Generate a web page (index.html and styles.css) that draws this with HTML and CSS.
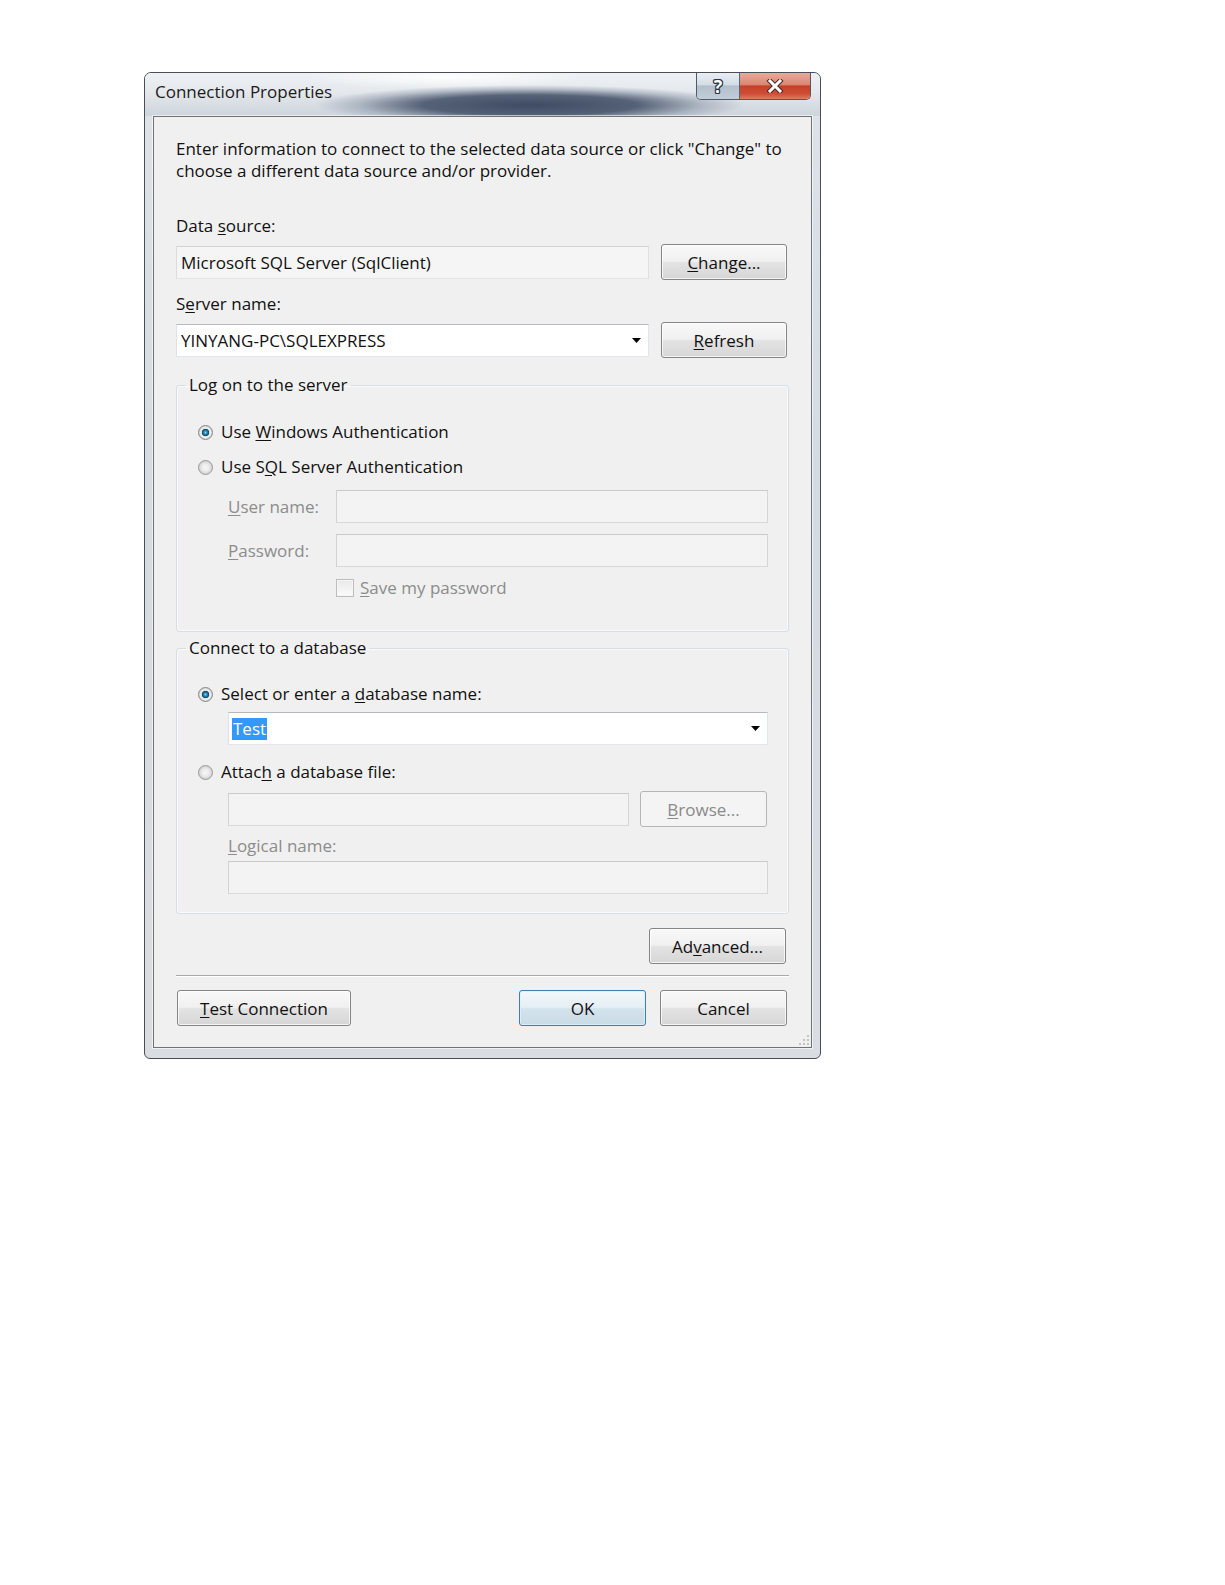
FILE: index.html
```html
<!DOCTYPE html>
<html>
<head>
<meta charset="utf-8">
<title>Connection Properties</title>
<link rel="stylesheet" href="styles.css">
</head>
<body>
<div class="dialog">
  <div class="titlebar">
    <span class="title">Connection Properties</span>
    <div class="caption-btns">
      <span class="cap-btn help">?</span>
      <span class="cap-btn close">
        <svg width="18" height="14" viewBox="0 0 18 14">
          <path d="M4 2 L14 12 M14 2 L4 12" stroke="#4a2a26" stroke-width="5" stroke-linecap="square"/>
          <path d="M4 2 L14 12 M14 2 L4 12" stroke="#ffffff" stroke-width="3" stroke-linecap="square"/>
        </svg>
      </span>
    </div>
  </div>
  <div class="client">
    <p class="intro">Enter information to connect to the selected data source or click "Change" to<br>choose a different data source and/or provider.</p>

    <div class="label first-label">Data <u>s</u>ource:</div>
    <div class="row">
      <div class="field readonly">Microsoft SQL Server (SqlClient)</div>
      <button class="btn"><u>C</u>hange...</button>
    </div>

    <div class="label second-label">S<u>e</u>rver name:</div>
    <div class="row">
      <div class="field combo"><span>YINYANG-PC\SQLEXPRESS</span><svg class="arrow" width="9" height="5" viewBox="0 0 9 5"><path d="M0 0 H9 L4.5 5 Z" fill="#000"/></svg></div>
      <button class="btn"><u>R</u>efresh</button>
    </div>

    <fieldset class="group group-logon">
      <legend>Log on to the server</legend>
      <div class="opt"><span class="radio checked"></span><span>Use <u>W</u>indows Authentication</span></div>
      <div class="opt opt-gap"><span class="radio"></span><span>Use S<u>Q</u>L Server Authentication</span></div>
      <div class="subrow user-row">
        <span class="sublabel dis"><u>U</u>ser name:</span>
        <div class="field disabled"></div>
      </div>
      <div class="subrow pass-row">
        <span class="sublabel dis"><u>P</u>assword:</span>
        <div class="field disabled"></div>
      </div>
      <div class="check-row">
        <span class="checkbox"></span><span class="dis"><u>S</u>ave my password</span>
      </div>
    </fieldset>

    <fieldset class="group group-db">
      <legend>Connect to a database</legend>
      <div class="opt"><span class="radio checked"></span><span>Select or enter a <u>d</u>atabase name:</span></div>
      <div class="field combo db-combo"><span class="sel">Test</span><svg class="arrow" width="9" height="5" viewBox="0 0 9 5"><path d="M0 0 H9 L4.5 5 Z" fill="#000"/></svg></div>
      <div class="opt attach-opt"><span class="radio"></span><span>Attac<u>h</u> a database file:</span></div>
      <div class="attach-row">
        <div class="field disabled"></div>
        <button class="btn btn-disabled browse"><u>B</u>rowse...</button>
      </div>
      <div class="indent-label dis"><u>L</u>ogical name:</div>
      <div class="field disabled logical"></div>
    </fieldset>

    <div class="adv-row">
      <button class="btn adv">Ad<u>v</u>anced...</button>
    </div>

    <div class="separator"></div>

    <div class="bottom-row">
      <button class="btn test"><u>T</u>est Connection</button>
      <div class="ok-cancel">
        <button class="btn default">OK</button>
        <button class="btn">Cancel</button>
      </div>
    </div>

    <svg class="grip" width="12" height="12" viewBox="0 0 12 12">
      <rect x="9" y="1" width="2" height="2" fill="#c4c4c4"/>
      <rect x="5" y="5" width="2" height="2" fill="#c4c4c4"/>
      <rect x="9" y="5" width="2" height="2" fill="#c4c4c4"/>
      <rect x="1" y="9" width="2" height="2" fill="#c4c4c4"/>
      <rect x="5" y="9" width="2" height="2" fill="#c4c4c4"/>
      <rect x="9" y="9" width="2" height="2" fill="#c4c4c4"/>
    </svg>
  </div>
</div>
</body>
</html>
```

FILE: styles.css
```css
* { box-sizing: border-box; }

body {
  margin: 0;
  background: #ffffff;
  font-family: "Open Sans", "Noto Sans", sans-serif;
  font-size: 17px;
  color: #111111;
}

u { text-decoration: underline; text-underline-offset: 2px; }

.dialog {
  margin: 72px 0 0 144px;
  width: 677px;
  height: 987px;
  border: 1px solid #4a4d52;
  border-radius: 7px 7px 6px 6px;
  background: linear-gradient(to bottom, #dde3e9 0%, #d4dbe2 40%, #d9dde2 100%);
  padding: 0 8px 10px;
  display: flex;
  flex-direction: column;
}

.titlebar {
  height: 43px;
  margin: 0 -8px;
  padding: 0 9px 0 10px;
  display: flex;
  justify-content: space-between;
  align-items: flex-start;
  border-radius: 6px 6px 0 0;
  background:
    radial-gradient(ellipse 215px 20px at 385px 32px, rgba(50, 63, 88, 0.92) 0%, rgba(56, 70, 95, 0.82) 50%, rgba(100, 114, 136, 0.35) 80%, rgba(120, 132, 150, 0) 100%),
    radial-gradient(ellipse 140px 12px at 300px 4px, rgba(255, 255, 255, 0.9), rgba(255, 255, 255, 0)),
    linear-gradient(to bottom, #eef1f4 0%, #e4e8ec 45%, #cdd4dc 100%);
}

.title {
  padding-top: 8px;
  line-height: 22px;
  font-size: 17px;
  color: #1b1b1b;
}

.caption-btns {
  display: flex;
  height: 27px;
  border: 1px solid #4f5a68;
  border-top: none;
  border-radius: 0 0 5px 5px;
  overflow: hidden;
}

.cap-btn {
  display: flex;
  align-items: center;
  justify-content: center;
}

.help {
  width: 43px;
  border-right: 1px solid #5a6574;
  background: linear-gradient(to bottom, #e9eef3 0%, #d4dce5 45%, #b3bfcc 50%, #c2cdd9 100%);
  color: #ffffff;
  font-weight: 700;
  font-size: 18px;
  line-height: 1;
  text-shadow: 1px 0 0 #2a3544, -1px 0 0 #2a3544, 0 1px 0 #2a3544, 0 -1px 0 #2a3544, 1px 1px 0 #2a3544, -1px -1px 0 #2a3544, 1px -1px 0 #2a3544, -1px 1px 0 #2a3544;
}

.close {
  width: 70px;
  background: linear-gradient(to bottom, #e8aa9c 0%, #d98772 45%, #c64029 50%, #cf4d35 80%, #df7c62 100%);
}

.client {
  flex: 1;
  position: relative;
  background: #f0f0f0;
  border: 1px solid #727272;
  box-shadow: 0 0 0 1px rgba(255, 255, 255, 0.6);
  padding: 21px 22px 0;
}

.intro {
  margin: 0;
  line-height: 22px;
}

.label { line-height: 22px; }
.first-label { margin-top: 33px; }
.second-label { margin-top: 13px; }

.row {
  display: flex;
  align-items: center;
  gap: 12px;
  height: 36px;
  margin-top: 7px;
}

.row .btn { margin-right: 2px; }

.field {
  height: 33px;
  border: 1px solid #d6d6d6;
  padding: 0 4px;
  line-height: 31px;
  white-space: nowrap;
}

.row .field { flex: 1; }

.field.readonly {
  background: #f5f5f5;
  border-color: #d2d2d2 #e0e0e0 #e4e4e4 #dcdcdc;
}

.field.combo {
  background: #ffffff;
  border-color: #b5b9bf #e1e6eb #e3e7eb #dfe3e8;
  display: flex;
  align-items: center;
  justify-content: space-between;
  padding-right: 7px;
}

.field.disabled {
  background: #f3f3f3;
  border-color: #c9c9c9 #d6d6d6 #d9d9d9 #d2d2d2;
}

.btn {
  width: 126px;
  height: 36px;
  flex-shrink: 0;
  border: 1px solid #858585;
  border-radius: 3px;
  background: linear-gradient(to bottom, #f8f8f8 0%, #f0f0f0 48%, #e3e3e3 52%, #d6d6d6 100%);
  box-shadow: inset 0 0 0 1px rgba(255, 255, 255, 0.75);
  font-family: inherit;
  font-size: 17px;
  color: #111111;
  padding: 0;
  display: flex;
  align-items: center;
  justify-content: center;
}

.btn.default {
  border-color: #3e7fae;
  background: linear-gradient(to bottom, #f2f8fb 0%, #e5eff5 48%, #d4e3ec 52%, #c9dbe6 100%);
  box-shadow: inset 0 0 0 1px rgba(220, 240, 252, 0.9);
}

.btn-disabled {
  border-color: #b3b6b9;
  background: #f4f4f4;
  box-shadow: none;
  color: #8a8a8a;
}

.group {
  margin: 16px 0 0;
  min-width: 0;
  border: 1px solid #d8dde1;
  border-radius: 3px;
  box-shadow: inset 0 0 0 1px #fafafa;
  padding: 25px 20px 32px 21px;
}

.group legend {
  padding: 0 3px;
  margin-left: -12px;
  line-height: 22px;
}

.group-db {
  margin-top: 5px;
  padding-top: 24px;
  padding-bottom: 19px;
}

.opt {
  display: flex;
  align-items: center;
  gap: 8px;
  line-height: 22px;
}

.opt-gap { margin-top: 13px; }

.radio {
  width: 15px;
  height: 15px;
  flex-shrink: 0;
  border-radius: 50%;
  border: 1px solid #9a9a9a;
  background: radial-gradient(circle closest-side, #f7f7f7 0%, #ececec 55%, #d2d2d2 100%);
}

.radio.checked {
  border-color: #86898c;
  background: radial-gradient(circle closest-side at 50% 50%, #8fd3ee 0%, #2f95bf 22%, #165f86 42%, #0e4463 54%, #d9d9d9 58%, #f3f3f3 75%, #cfcfcf 100%);
}

.subrow {
  display: flex;
  align-items: center;
  height: 34px;
  padding-left: 30px;
}

.user-row { margin-top: 11px; }
.pass-row { margin-top: 10px; }

.sublabel { width: 108px; flex-shrink: 0; }
.subrow .field { flex: 1; }

.dis { color: #8c8c8c; }

.check-row {
  display: flex;
  align-items: center;
  gap: 6px;
  margin-top: 10px;
  padding-left: 138px;
  line-height: 22px;
}

.checkbox {
  width: 18px;
  height: 18px;
  border: 1px solid #bdbdbd;
  background: linear-gradient(to bottom, #e9e9e9, #fbfbfb);
  box-shadow: inset 0 0 0 1px #f6f6f6;
}

.db-combo {
  margin-top: 7px;
  margin-left: 30px;
  border-color: #8e9aa6 #c2cfdb #c9d5e0 #b8c5d1;
  padding-left: 3px;
}

.sel {
  background: #3399ff;
  color: #ffffff;
  line-height: 22px;
  padding: 0 1px;
}

.attach-opt { margin-top: 16px; }

.attach-row {
  display: flex;
  align-items: center;
  gap: 11px;
  height: 36px;
  margin-top: 8px;
  padding-left: 30px;
}

.attach-row .field { flex: 1; }
.browse { width: 127px; margin-right: 1px; }

.indent-label {
  margin-top: 8px;
  padding-left: 30px;
  line-height: 22px;
}

.logical {
  margin-top: 4px;
  margin-left: 30px;
}

.adv-row {
  display: flex;
  justify-content: flex-end;
  margin-top: 14px;
}

.adv { width: 137px; margin-right: 3px; }

.separator {
  margin-top: 11px;
  border-top: 1px solid #a9a9a9;
  border-bottom: 1px solid #ffffff;
}

.bottom-row {
  display: flex;
  justify-content: space-between;
  align-items: center;
  margin-top: 13px;
}

.test { width: 174px; margin-left: 1px; }

.ok-cancel {
  display: flex;
  gap: 14px;
  margin-right: 2px;
}

.ok-cancel .btn { width: 127px; }

.grip {
  position: absolute;
  right: 1px;
  bottom: 1px;
}
```
